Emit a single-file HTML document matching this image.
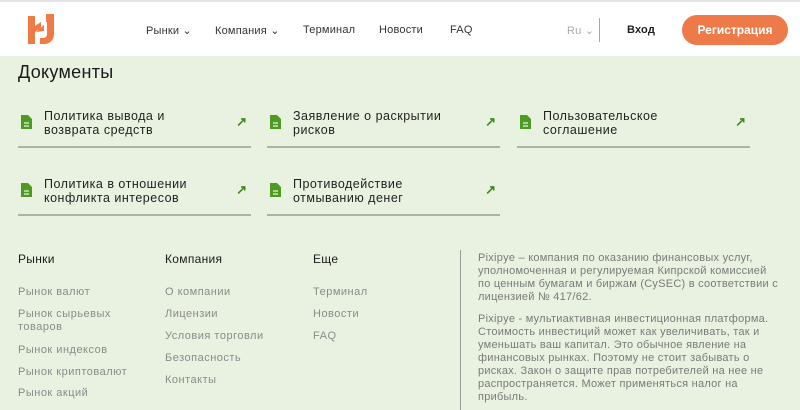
<!DOCTYPE html>
<html><head><meta charset="utf-8"><style>
*{margin:0;padding:0;box-sizing:border-box}
body{width:800px;height:410px;overflow:hidden;background:#e9f2e1;font-family:"Liberation Sans",sans-serif;position:relative;color:#1d1d1d}
.hdr{position:absolute;left:0;top:0;width:800px;height:56px;background:#fff;border-top:2px solid #e4e4e4}
.a{position:absolute;white-space:nowrap}
.nav{font-size:11px;top:22px;color:#333;letter-spacing:0.2px}
.btn{left:682px;top:13px;width:106px;height:30px;border-radius:15px;background:#ee7a4a;color:#fff;font-size:12px;font-weight:bold;text-align:center;line-height:30px}
h1{position:absolute;left:18px;top:62px;font-size:18px;font-weight:normal;color:#1a1a1a;letter-spacing:0.3px}
.doc{position:absolute;width:233px;height:40px;border-bottom:2px solid #a9b5a2}
.doc .t{position:absolute;left:26px;top:1px;font-size:12.5px;line-height:14px;color:#222;letter-spacing:0.5px}
.doc svg.ic{position:absolute;left:3px;top:7px}
.doc .ar{position:absolute;right:4px;top:6px;color:#3f8a1f;font-size:13px;font-weight:bold}
.fh{font-size:12px;top:252px;color:#1a1a1a;letter-spacing:0.3px}
.fl{font-size:11px;color:#8a8a8a;line-height:13px;letter-spacing:0.5px}
.rt{position:absolute;left:478px;width:320px;font-size:11px;line-height:13px;color:#7a7a7a;letter-spacing:0.25px;white-space:nowrap}
</style></head><body>
<div class="hdr">
<svg class="a" style="left:26px;top:10px" width="32" height="36" viewBox="0 0 32 36"><path d="M2 4h7v10l6-4v6l-6 4v12H2z" fill="#ef7a45"/><path d="M20 2h8v20c0 6-4 10-10 10h-4v-6h3c3 0 4-2 4-4V10h-1z" fill="#ef7a45"/><path d="M10 20l8-7v6z" fill="#ef7a45"/></svg>
<div class="a nav" style="left:146px">Рынки ⌄</div>
<div class="a nav" style="left:215px">Компания ⌄</div>
<div class="a nav" style="left:303px">Терминал</div>
<div class="a nav" style="left:379px">Новости</div>
<div class="a nav" style="left:450px">FAQ</div>
<div class="a nav" style="left:567px;color:#aaa">Ru ⌄</div>
<div class="a" style="left:599px;top:16px;width:1px;height:24px;background:#aaa"></div>
<div class="a nav" style="left:627px;font-weight:bold;color:#222">Вход</div>
<div class="a btn">Регистрация</div>
</div>
<h1>Документы</h1>

<div class="doc" style="left:18px;top:108px"><svg class="ic" width="11" height="14"><path d="M0 0h7l4 4v10H0z" fill="#4e9b22"/><path d="M3 8h5M3 11h5" stroke="#e9f2e1" stroke-width="1.3"/></svg><div class="t">Политика вывода и<br>возврата средств</div><div class="ar">↗</div></div>
<div class="doc" style="left:267px;top:108px"><svg class="ic" width="11" height="14"><path d="M0 0h7l4 4v10H0z" fill="#4e9b22"/><path d="M3 8h5M3 11h5" stroke="#e9f2e1" stroke-width="1.3"/></svg><div class="t">Заявление о раскрытии<br>рисков</div><div class="ar">↗</div></div>
<div class="doc" style="left:517px;top:108px"><svg class="ic" width="11" height="14"><path d="M0 0h7l4 4v10H0z" fill="#4e9b22"/><path d="M3 8h5M3 11h5" stroke="#e9f2e1" stroke-width="1.3"/></svg><div class="t">Пользовательское<br>соглашение</div><div class="ar">↗</div></div>
<div class="doc" style="left:18px;top:176px"><svg class="ic" width="11" height="14"><path d="M0 0h7l4 4v10H0z" fill="#4e9b22"/><path d="M3 8h5M3 11h5" stroke="#e9f2e1" stroke-width="1.3"/></svg><div class="t">Политика в отношении<br>конфликта интересов</div><div class="ar">↗</div></div>
<div class="doc" style="left:267px;top:176px"><svg class="ic" width="11" height="14"><path d="M0 0h7l4 4v10H0z" fill="#4e9b22"/><path d="M3 8h5M3 11h5" stroke="#e9f2e1" stroke-width="1.3"/></svg><div class="t">Противодействие<br>отмыванию денег</div><div class="ar">↗</div></div>

<div class="a fh" style="left:18px">Рынки</div>
<div class="a fh" style="left:165px">Компания</div>
<div class="a fh" style="left:313px">Еще</div>
<div class="a fl" style="left:18px;top:286px">Рынок валют</div>
<div class="a fl" style="left:18px;top:308px">Рынок сырьевых<br>товаров</div>
<div class="a fl" style="left:18px;top:344px">Рынок индексов</div>
<div class="a fl" style="left:18px;top:366px">Рынок криптовалют</div>
<div class="a fl" style="left:18px;top:387px">Рынок акций</div>
<div class="a fl" style="left:165px;top:286px">О компании</div>
<div class="a fl" style="left:165px;top:308px">Лицензии</div>
<div class="a fl" style="left:165px;top:330px">Условия торговли</div>
<div class="a fl" style="left:165px;top:352px">Безопасность</div>
<div class="a fl" style="left:165px;top:374px">Контакты</div>
<div class="a fl" style="left:313px;top:286px">Терминал</div>
<div class="a fl" style="left:313px;top:308px">Новости</div>
<div class="a fl" style="left:313px;top:330px">FAQ</div>
<div class="a" style="left:460px;top:250px;width:1px;height:160px;background:#999"></div>
<div class="rt" style="top:252px">Pixipye – компания по оказанию финансовых услуг,<br>уполномоченная и регулируемая Кипрской комиссией<br>по ценным бумагам и биржам (CySEC) в соответствии с<br>лицензией № 417/62.</div>
<div class="rt" style="top:313px">Pixipye - мультиактивная инвестиционная платформа.<br>Стоимость инвестиций может как увеличивать, так и<br>уменьшать ваш капитал. Это обычное явление на<br>финансовых рынках. Поэтому не стоит забывать о<br>рисках. Закон о защите прав потребителей на нее не<br>распространяется. Может применяться налог на<br>прибыль.</div>
</body></html>
